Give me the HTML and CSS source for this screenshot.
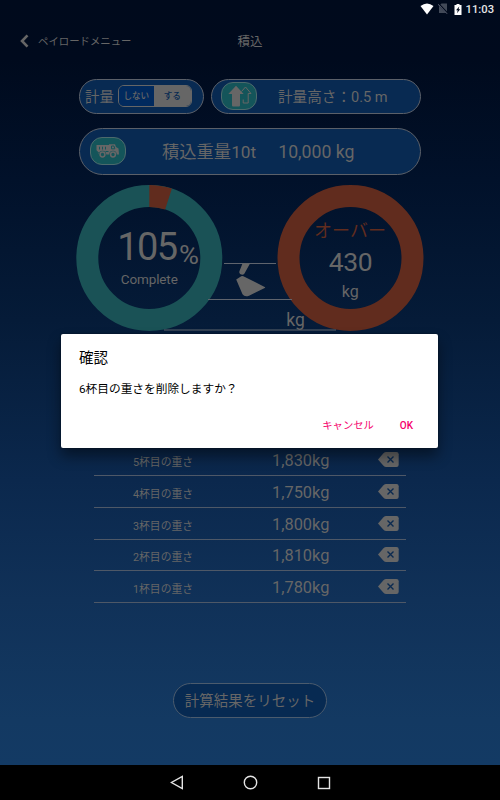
FILE: index.html
```html
<!DOCTYPE html>
<html lang="ja">
<head>
  <meta charset="UTF-8">
  <title>積込</title>
  <link rel="stylesheet" href="styles.css">
</head>
<body>
  <div class="screen">
    <!-- Status bar -->
    <div class="status-bar">
      <svg width="14" height="12" viewBox="0 0 14 12"><path d="M.5 3Q7-2.2 13.500 3L7 11.500Z" fill="#fff"/></svg>
      <svg class="sim" width="10" height="11" viewBox="0 0 10 11"><path d="M3.500.5H9V10H1V3Z" fill="#424a58"/><path d="M0 .5 9.500 10.500" stroke="#000a1c" stroke-width="2"/><path d="M0 1.200 9 10.700" stroke="#6a7080"/></svg>
      <svg class="battery" width="8" height="11" viewBox="0 0 8 11"><path d="M2.500 0h3v1H7.500v10H.5V1h2z" fill="#fff"/><path d="M5.300 2.500 2 6.200h1.700L3 9.200l3.200-4H4.600z" fill="#000a1c"/></svg>
      <span>11:03</span>
    </div>

    <!-- Header -->
    <header class="header">
      <a class="back">
        <svg width="9" height="14" viewBox="0 0 9 14"><path d="M7.500 1.300 2 7l5.500 5.700" fill="none" stroke="#666" stroke-width="2.600"/></svg>
        <span>ペイロードメニュー</span>
      </a>
      <h1>積込</h1>
    </header>

    <!-- Settings -->
    <div class="settings">
      <div class="pill measure">
        <span>計量</span>
        <div class="toggle">
          <span class="off">しない</span>
          <span class="on">する</span>
        </div>
      </div>
      <div class="pill height">
        <div class="badge">
          <svg width="34" height="26" viewBox="0 0 34 26">
            <path d="M19.500 8.500 23.500 4l5.500 6.500h-2.800V20h-5v-3.500" fill="none" stroke="#666" stroke-width="1"/>
            <path d="M14 2.800 21.700 11H18v11.500q0 1-1 1h-6q-1 0-1-1V11H6.300Z" fill="#666"/>
          </svg>
        </div>
        <span>計量高さ：0.5 m</span>
      </div>
      <div class="pill load">
        <div class="badge">
          <svg width="34" height="26" viewBox="0 0 34 26">
            <path d="M5.500 7H18v-.8h6l1 2.800 2.500 1.500 .5 6H8L5.500 12Z" fill="#666"/>
            <path d="M8.500 8.700v2.800M11.500 8.700v2.800M14.500 8.700v2.800M20.500 8v2.800h3.300l-.8-2.800z" fill="none" stroke="#14555a" stroke-width="1"/>
            <path d="M6 13.500l3 2.500M14.500 13.500h3" stroke="#14555a" stroke-width="1"/>
            <circle cx="11.500" cy="16.500" r="3.700" fill="#14555a"/>
            <circle cx="22" cy="16.500" r="3.700" fill="#14555a"/>
            <circle cx="11.500" cy="16.500" r="2.400" fill="none" stroke="#666" stroke-width="1.500"/>
            <circle cx="22" cy="16.500" r="2.400" fill="none" stroke="#666" stroke-width="1.500"/>
          </svg>
        </div>
        <span class="load-name">積込重量10t</span>
        <span class="load-weight">10,000 kg</span>
      </div>
    </div>

    <!-- Progress, bucket and overload -->
    <svg class="gauges" width="348" height="148" viewBox="76 184 348 148">
      <g fill="none" stroke-width="22">
        <circle cx="149.300" cy="258" r="62" stroke="#1a5256"/>
        <path d="M149.300 196A62 62 0 0 1 168.500 199.050" stroke="#612c1e"/>
        <circle cx="350.500" cy="258" r="62" stroke="#612c1e"/>
      </g>
      <g fill="#5f646d">
        <rect x="224" y="263" width="52" height="1"/>
        <rect x="208" y="299" width="84" height="1"/>
        <rect x="164" y="329.500" width="172" height="1"/>
      </g>
      <path d="M242.500 263.500h7.500l-5.500 10q-1.500 2-4 .8-1.800-1-1-3.200zM236.200 279.600l5-3.300q1-.6 2.200 0l21.300 10.600q1 .5 0 1.100L249 295.800q-4.500 1.500-6.500-1.500Z" fill="#666"/>
      <g class="gauge-text" text-anchor="middle">
        <text x="147.700" y="260" font-size="38" textLength="61">105</text>
        <text x="189" y="264" font-size="25" textLength="20" lengthAdjust="spacingAndGlyphs">%</text>
        <text x="149.300" y="284" font-size="13.500" textLength="57">Complete</text>
        <text class="over" x="350" y="237" font-size="18">オーバー</text>
        <text x="350.700" y="270.500" font-size="26.500" textLength="44">430</text>
        <text x="350.200" y="296.500" font-size="17" textLength="17" lengthAdjust="spacingAndGlyphs">kg</text>
        <text x="295.500" y="326" font-size="17.500">kg</text>
      </g>
    </svg>

    <!-- Weight of each bucket -->
    <ul class="buckets" id="buckets"></ul>

    <button type="button" class="reset">計算結果をリセット</button>

    <!-- Navigation bar -->
    <nav class="nav-bar">
      <svg width="14" height="15" viewBox="0 0 14 15"><path d="M12.300 1.500v12L1.500 7.500Z"/></svg>
      <svg width="15" height="15" viewBox="0 0 15 15"><circle cx="7.500" cy="7.500" r="6.200"/></svg>
      <svg width="14" height="14" viewBox="0 0 14 14"><rect x="1.500" y="1.500" width="11" height="11"/></svg>
    </nav>

    <div class="dialog">
      <h2>確認</h2>
      <p>6杯目の重さを削除しますか？</p>
      <div class="actions">
        <button type="button">キャンセル</button>
        <button type="button" class="ok">OK</button>
      </div>
    </div>
  </div>

  <script src="script.js"></script>
</body>
</html>
```

FILE: styles.css
```css
* {
  box-sizing: border-box;
}
body {
  margin: 0;
  font-family: Roboto, 'Noto Sans CJK JP', sans-serif;
  color: #666;
}
h1, h2, p, ul {
  margin: 0;
  padding: 0;
  font-weight: 400;
}
button {
  font-family: inherit;
  cursor: pointer;
}
svg {
  display: block;
  flex: none;
}
.screen {
  position: relative;
  display: flex;
  flex-direction: column;
  align-items: center;
  width: 500px;
  height: 800px;
  overflow: hidden;
  white-space: nowrap;
  background: linear-gradient(#000a1c 0, #000a1d 60px, #01112a 180px, #051b38 320px, #0b284d 480px, #103158 600px, #133962 720px, #133a64 765px);
}
.status-bar {
  display: flex;
  align-items: center;
  justify-content: flex-end;
  width: 100%;
  height: 18px;
  padding-right: 6px;
  color: #e6e6e6;
  font-size: 11.2px;
  font-weight: 500;
}
.status-bar svg {
  margin-top: -1px;
}
.status-bar .sim {
  margin-left: 4px;
}
.status-bar .battery {
  margin: 0 4px 0 6px;
}
.header {
  display: grid;
  grid-template-columns: 1fr auto 1fr;
  align-items: center;
  width: 100%;
  height: 45px;
  padding: 0 20px;
}
.back {
  display: flex;
  align-items: center;
  gap: 9px;
  font-size: 10.4px;
}
.header h1 {
  font-size: 12.5px;
}

/* Settings */
.settings {
  display: flex;
  flex-wrap: wrap;
  gap: 14px 7px;
  width: 342px;
  margin-top: 15.5px;
}
.pill {
  display: flex;
  align-items: center;
  height: 35px;
  border: 1px solid #5b6069;
  border-radius: 24px;
  background: #082a52;
  font-size: 14.4px;
}
.pill > span {
  padding-bottom: 2px;
}
.measure {
  width: 125px;
  padding-left: 5px;
  gap: 4px;
}
.toggle {
  display: flex;
  width: 74px;
  height: 22px;
  border: 1px solid #666;
  border-radius: 6px;
  overflow: hidden;
  font-size: 8.6px;
  font-weight: 500;
  line-height: 21px;
  text-align: center;
}
.off {
  width: 35px;
  background: #012a5e;
}
.on {
  flex: 1;
  background: #666;
  color: #082a52;
}
.height {
  width: 210px;
  padding-left: 9px;
  gap: 21px;
  font-size: 14.6px;
}
.load {
  width: 342px;
  height: 47px;
  padding-left: 10px;
  font-size: 17.3px;
}
.load-name {
  margin: 0 22px 0 36px;
}
.pill .load-weight {
  padding: 1px 0 0;
  font-size: 17.7px;
}
.badge {
  width: 36px;
  height: 28px;
  border: 1px solid #4d6a6c;
  border-radius: 12px;
  background: #14555a;
}

.gauges {
  margin-top: 9px;
}
.gauge-text {
  fill: #666;
}
.gauge-text .over {
  fill: #612c1e;
}

/* Bucket rows */
.buckets {
  width: 312px;
  margin-top: 113px;
  list-style: none;
}
.buckets li {
  display: grid;
  grid-template-columns: 138px 1fr 28px;
  align-items: center;
  height: 31.7px;
  border-bottom: 1px solid #4e5867;
}
.label {
  padding-top: 3px;
  text-align: center;
  font-size: 10.8px;
}
.weight {
  padding: 2px 0 0 40px;
  font-size: 16.4px;
}
.reset {
  width: 154px;
  height: 35px;
  margin-top: 80px;
  padding: 0 0 2px;
  border: 1px solid #4b5b6d;
  border-radius: 18px;
  background: #072a52;
  color: #666;
  font-size: 14.5px;
}

.nav-bar {
  display: flex;
  justify-content: center;
  align-items: center;
  gap: 59px;
  width: 100%;
  height: 35px;
  margin-top: auto;
  background: #000;
}
.nav-bar svg {
  fill: none;
  stroke: #e4e4e4;
  stroke-width: 1.4;
}

/* Confirm dialog */
.dialog {
  position: absolute;
  top: 334px;
  left: 61px;
  width: 377px;
  height: 114px;
  padding: 13px 18px;
  border-radius: 2px;
  background: #fff;
  color: #000;
  box-shadow: 0 8px 14px rgba(0, 0, 0, 0.45), 0 0 2px rgba(0, 0, 0, 0.5);
}
.dialog h2 {
  font-size: 14.5px;
  line-height: 23px;
}
.dialog p {
  margin-top: 10px;
  font-size: 11.7px;
  line-height: 18px;
}
.actions {
  display: flex;
  justify-content: flex-end;
  gap: 26px;
  margin-top: 19px;
  padding-right: 7px;
}
.actions button {
  padding: 0;
  border: none;
  background: none;
  color: #f5006c;
  font-size: 10.3px;
  line-height: 18px;
}
.actions .ok {
  font-size: 10px;
  font-weight: 500;
}
```

FILE: script.js
```js
const weights = ['1,830', '1,750', '1,800', '1,810', '1,780'];
const list = document.getElementById('buckets');

weights.forEach((weight, index) => {
  const row = document.createElement('li');
  row.innerHTML = `<span class="label">${weights.length - index}杯目の重さ</span>
    <span class="weight">${weight}kg</span>
    <svg width="21" height="15" viewBox="0 0 21 15">
      <path d="M0 7.500 5.500 1.300Q6.700 0 8.200 0H18.500Q20.700 0 20.700 2.200V12.800Q20.700 15 18.500 15H8.200Q6.700 15 5.500 13.700Z" fill="#666"/>
      <path d="M9.500 4.500 15.500 10.500M15.500 4.500 9.500 10.500" stroke="#0b2a50" stroke-width="1.400"/>
    </svg>`;
  list.appendChild(row);
});
```
